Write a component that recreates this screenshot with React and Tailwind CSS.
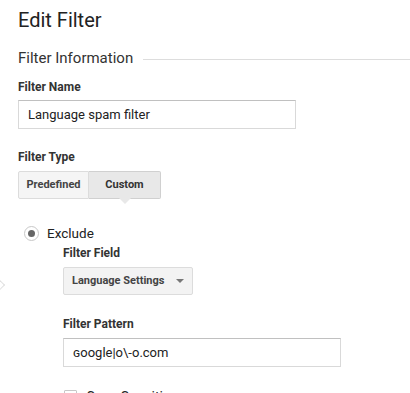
import React from 'react';

const Label = ({ children, className = '' }) => (
  <div className={`text-[12px] font-bold text-[#333] leading-none ${className}`}>{children}</div>
);

export default function App() {
  return (
    <div className="relative w-[410px] h-[393px] overflow-hidden bg-white text-[#222] font-['Roboto',sans-serif]">
      <div className="pl-[18px] pt-[8px]">
        <h1 className="text-[20px] leading-[24px] text-[#222]">Edit Filter</h1>

        <div className="mt-[17px] flex items-center">
          <span className="text-[15px] leading-[18px] text-[#333] pr-[10px]">Filter Information</span>
          <div className="flex-1 h-px bg-[#ddd] mt-[2px]" />
        </div>

        <Label className="mt-[14px]">Filter Name</Label>
        <input
          readOnly
          value="Language spam filter"
          className="mt-[7px] block w-[278px] h-[29px] border border-[#d9d9d9] border-t-[#c0c0c0] px-[9px] text-[13px] text-[#222] outline-none"
        />

        <Label className="mt-[22px]">Filter Type</Label>
        <div className="mt-[8px] flex">
          <div className="w-[71px] h-[28px] flex items-center justify-center border border-[#dcdcdc] bg-[#f5f5f5] rounded-l-[2px] text-[11px] font-bold text-[#444]">
            Predefined
          </div>
          <div className="relative w-[72px] h-[28px] flex items-center justify-center border border-l-0 border-[#d0d0d0] bg-[#e8e8e8] rounded-r-[2px] text-[11px] font-bold text-[#333]">
            Custom
            <div className="absolute left-1/2 -bottom-[6px] -ml-[6px] w-0 h-0 border-l-[6px] border-r-[6px] border-t-[6px] border-l-transparent border-r-transparent border-t-[#e8e8e8]" />
          </div>
        </div>

        <div className="mt-[27px] ml-[6px] flex items-center">
          <span className="w-[15px] h-[15px] rounded-full border border-[#c8c8c8] flex items-center justify-center">
            <span className="w-[7px] h-[7px] rounded-full bg-[#666]" />
          </span>
          <span className="ml-[8px] text-[13.5px] leading-none text-[#222]">Exclude</span>
        </div>

        <div className="ml-[45px]">
          <Label className="mt-[6px]">Filter Field</Label>
          <div className="mt-[8px] w-[130px] h-[28px] flex items-center border border-[#dcdcdc] bg-[#f3f3f3] rounded-[2px] pl-[8px] pr-[8px]">
            <span className="text-[11px] font-bold text-[#444]">Language Settings</span>
            <span className="ml-auto w-0 h-0 border-l-[4px] border-r-[4px] border-t-[4px] border-l-transparent border-r-transparent border-t-[#777]" />
          </div>

          <Label className="mt-[23px]">Filter Pattern</Label>
          <input
            readOnly
            value={'\u0262oogle|o\\-o.com'}
            className="mt-[8px] block w-[278px] h-[29px] border border-[#d9d9d9] border-t-[#c0c0c0] px-[9px] text-[13px] text-[#222] outline-none"
          />

          <div className="mt-[23px] ml-px flex items-start">
            <span className="w-[13px] h-[13px] border border-[#c8c8c8] rounded-[1px]" />
            <span className="ml-[9px] text-[14px] leading-none text-[#222]">Case Sensitive</span>
          </div>
        </div>
      </div>

      <div className="absolute left-[-7px] top-[280px] w-[10px] h-[10px] rotate-45 border-t border-r border-[#e0e0e0] bg-white" />
    </div>
  );
}
